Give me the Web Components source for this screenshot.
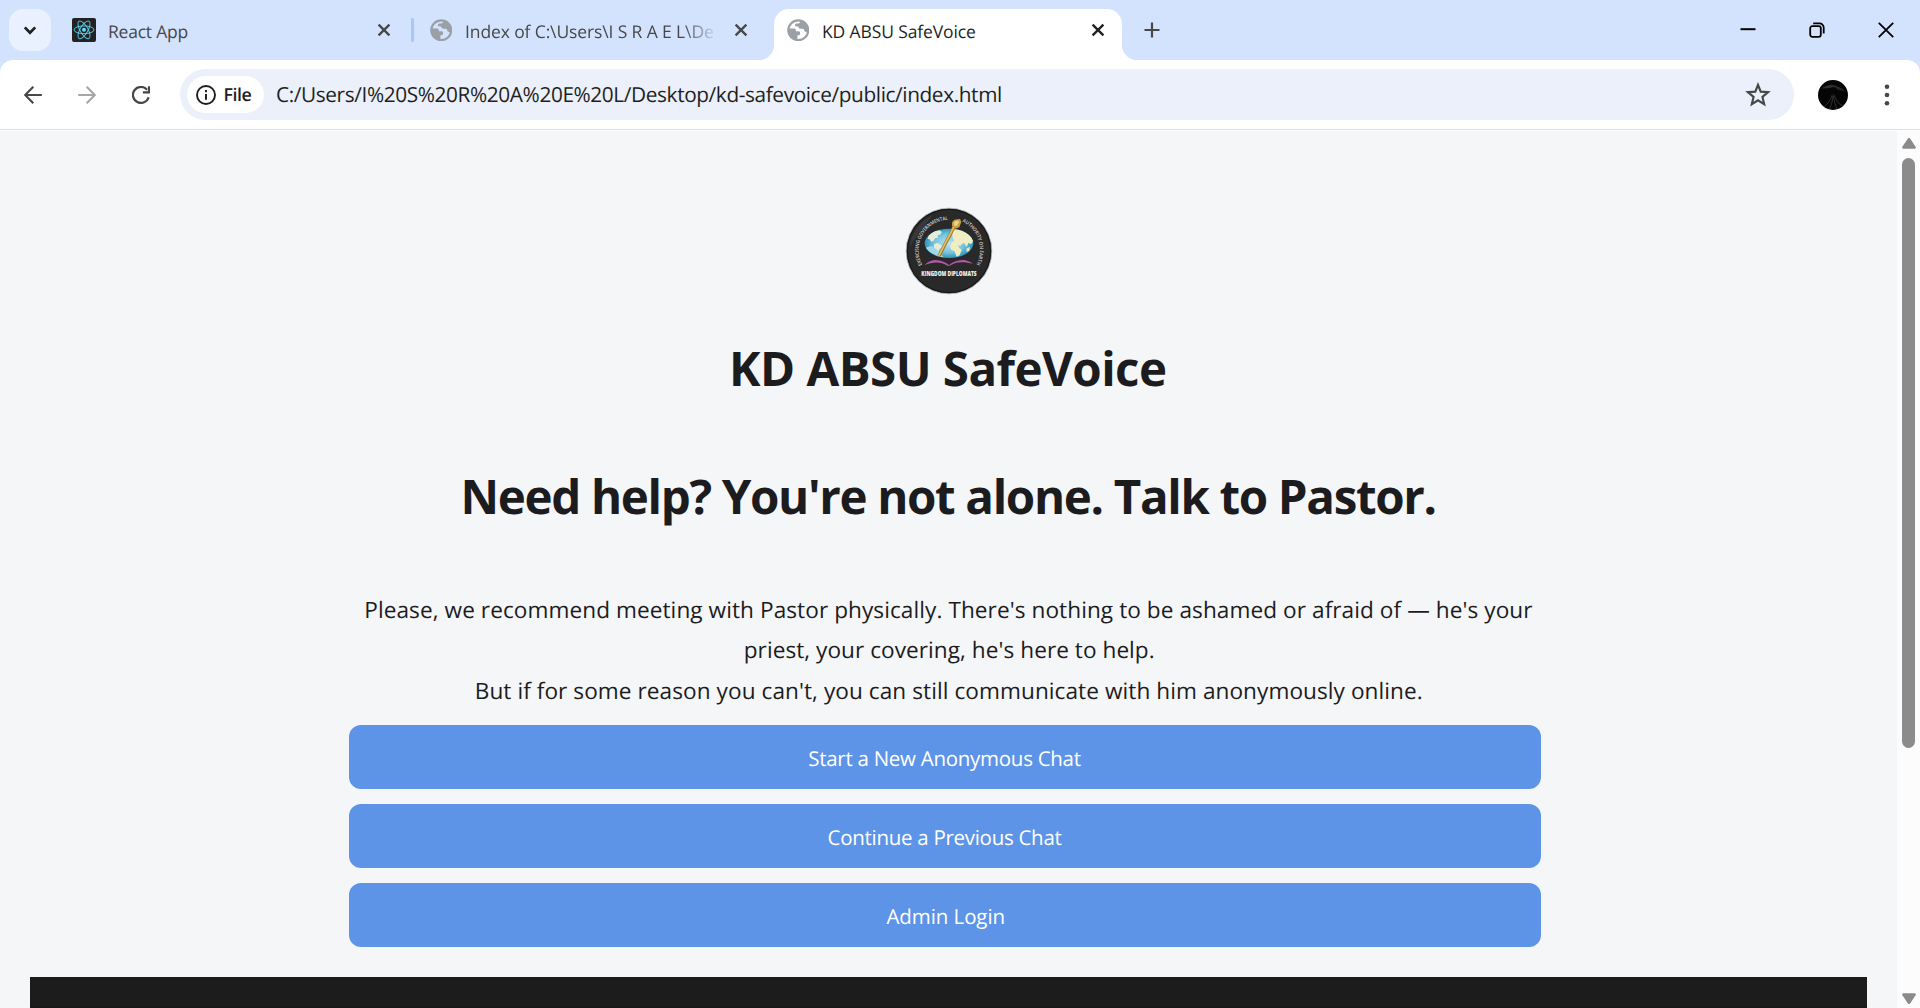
<!DOCTYPE html>
<html lang="en">
<head>
<meta charset="utf-8">
<title>KD ABSU SafeVoice</title>
<style>
html,body{margin:0;height:100%;overflow:hidden;font-family:"Open Sans","Noto Sans",sans-serif}
</style>
</head>
<body>
<browser-window></browser-window>
<script>
const define=(name,html,extra)=>customElements.define(name,class extends HTMLElement{
  constructor(){super();this.attachShadow({mode:'open'}).innerHTML=html;}
  connectedCallback(){if(extra)extra.call(this,this.shadowRoot);}
});

/* One line of text whose inked width is set by the "ink" attribute. */
const ctx=document.createElement('canvas').getContext('2d');
define('fit-text',`<style>
:host{display:block;white-space:nowrap;text-rendering:geometricPrecision;flex:none}
span{display:inline-block}</style><span></span>`,function(root){
  const s=root.querySelector('span'),t=this.getAttribute('text'),ink=+this.getAttribute('ink');
  s.textContent=t;
  this.style.width=ink+'px';
  const cs=getComputedStyle(s);
  ctx.font=cs.fontWeight+' '+cs.fontSize+' '+cs.fontFamily;
  const m=ctx.measureText(t),left=-m.actualBoundingBoxLeft,right=m.width-m.actualBoundingBoxRight;
  const adv=s.getBoundingClientRect().width;
  s.style.letterSpacing=(ink-(adv-left-right))/(t.length-1)+'px';
  s.style.marginLeft=-left+'px';
});

const icons={
 down:['0 0 24 24','<path d="M6.8 9.4l5.2 5.3 5.2-5.3" fill="none" stroke="#1f1f1f" stroke-width="2.7"/>'],
 close:['0 0 14 14','<path d="M1.6 1.6l10.8 10.8M12.4 1.6L1.6 12.4" stroke="currentColor" stroke-width="2.3"/>'],
 plus:['0 0 16 16','<path d="M8 .5v15M.5 8h15" stroke="#474747" stroke-width="2.2"/>'],
 globe:['0 0 24 24','<circle cx="12" cy="12" r="10.6" fill="none" stroke="#9aa0a6" stroke-width="2.4"/><path d="M2 10.2h5.2c2.2 0 2.3 1.5 2.3 2.8h2.8c1.3 0 1.7.8 1.7 2.2 0 1.7-1 2.2-2.9 2.2v5.1A10.6 10.6 0 0 1 2 10.2zM14.2 2.2c-.1 2.2-1 2.7-3.5 2.7-1.7 0-2.2.7-2.2 1.8 0 1 .9 1.2 2.6 1.2 1.5 0 1.6 2.4 3 2.4h2.8c1.2 0 1.3 1.6 1.8 2.6.4.9 1.3 1.2 3.4 1.1A10.6 10.6 0 0 0 14.2 2.2z" fill="#9aa0a6"/>'],
 react:['0 0 24 24','<rect width="24" height="24" rx="2" fill="#222"/><g fill="none" stroke="#61dafb" stroke-opacity=".85" stroke-width="1"><ellipse cx="12" cy="11.8" rx="10" ry="3.9"/><ellipse cx="12" cy="11.8" rx="10" ry="3.9" transform="rotate(60 12 11.8)"/><ellipse cx="12" cy="11.8" rx="10" ry="3.9" transform="rotate(120 12 11.8)"/></g><circle cx="12" cy="11.8" r="2" fill="#61dafb"/>'],
 back:['0 0 18 18','<path d="M17.8 9H1.8M9.3 .8L1.2 9l8.1 8.2" fill="none" stroke="currentColor" stroke-width="2.1"/>'],
 fwd:['0 0 18 18','<path d="M.2 9h16M8.7 .8L16.8 9l-8.1 8.2" fill="none" stroke="currentColor" stroke-width="2.1"/>'],
 reload:['0 0 18 18','<path d="M16.6 11.2A8 8 0 1 1 15 3.7" fill="none" stroke="#474747" stroke-width="2.2"/><path d="M17 .2v6.1h-6.1" fill="none" stroke="#474747" stroke-width="2.2"/>'],
 info:['0 0 20 20','<circle cx="10" cy="10" r="9" fill="none" stroke="#1f1f1f" stroke-width="1.9"/><path d="M10 8.9v5.9M10 5.1v2.1" stroke="#1f1f1f" stroke-width="2"/>'],
 star:['0 0 24 24','<path d="M12 2.7l2.5 6.2 6.8.5-5.2 4.4 1.6 6.6-5.7-3.5-5.7 3.5 1.6-6.6L2.7 9.4l6.8-.5z" fill="none" stroke="#474747" stroke-width="2"/>'],
 dots:['0 0 6 22','<g fill="#474747"><circle cx="3" cy="2.7" r="2.3"/><circle cx="3" cy="11" r="2.3"/><circle cx="3" cy="19.2" r="2.3"/></g>'],
 min:['0 0 16 16','<path d="M.5 7.2h15" stroke="#000" stroke-width="2"/>'],
 restore:['0 0 16 16','<rect x="1.2" y="4.2" width="10.6" height="10.6" rx="2" fill="none" stroke="#000" stroke-width="1.8"/><path d="M4.2 1.3h6.3a4.2 4.2 0 0 1 4.2 4.2v6" fill="none" stroke="#000" stroke-width="1.8"/>'],
 wclose:['0 0 16 16','<path d="M.8.8l14.4 14.4M15.2.8L.8 15.2" stroke="#000" stroke-width="1.8"/>'],
 avatar:['0 0 30 30','<circle cx="15" cy="15" r="15" fill="#050505"/><path d="M3 8.5c4-2.5 7-3 10-3.7l4 .8 8 3.5-3-.2-6-1.8-6 1.2z" fill="#303030"/><path d="M17 7l8 2 2 2-7-1z" fill="#242424"/><path d="M14.4 14.500C13 20 9.500 24 6 27M16 14.500c1.500 5 4.500 9 8.500 12M14.900 16c-.2 5-1.700 9-3.200 13M15.600 16c.3 5 1.900 9 3.400 13" fill="none" stroke="#3c3c3c" stroke-width=".8"/>'],
 up:['0 0 14 11','<path d="M5.700.8a1.600 1.600 0 0 1 2.600 0l5.300 7.900a1.300 1.300 0 0 1-1.100 2.100h-11a1.300 1.300 0 0 1-1.100-2.100z" fill="#8b8b8b"/>']
};
define('ui-icon',`<style>:host{display:block;flex:none}svg{display:block;width:100%;height:100%}</style><div style="height:100%"></div>`,function(root){
  const [vb,b]=icons[this.getAttribute('name')],w=this.getAttribute('w'),h=this.getAttribute('h')||w;
  this.style.width=w+'px';this.style.height=h+'px';
  root.querySelector('div').innerHTML=`<svg viewBox="${vb}">${b}</svg>`;
});

define('tab-strip',`<style>
:host{display:flex;height:60px;background:#d3e3fd;box-sizing:border-box;color:#474747}
.row{display:flex;align-items:center;height:42px;margin-top:9px}
.search{width:42px;height:42px;margin:9px 0 0 9px;border-radius:14px;background:#e9f1fe;display:flex;align-items:center;justify-content:center}
fit-text{font-size:17.500px;height:42px;padding-top:4px;box-sizing:border-box;line-height:39px}
.t1{margin-left:21px;width:318px}
.sep{width:3px;height:24px;background:#a8c7fa;margin:18px 0 0 0;border-radius:1px}
.t2{margin-left:15.500px;width:344.500px}
.clip{width:252px;overflow:hidden;-webkit-mask:linear-gradient(90deg,#000 216px,transparent 252px);mask:linear-gradient(90deg,#000 216px,transparent 252px)}
.active{width:348px;height:51px;margin-top:9px;background:#fff;border-radius:15px 15px 0 0;position:relative;color:#1f1f1f}
.active:before,.active:after{content:"";position:absolute;bottom:0;width:15px;height:15px}
.active:before{left:-15px;background:radial-gradient(circle at 0 0,transparent 14.600px,#fff 15.400px)}
.active:after{right:-15px;background:radial-gradient(circle at 100% 0,transparent 14.600px,#fff 15.400px)}
.active .row{margin-top:0}
.win{margin-left:auto;gap:53px;margin-right:26.500px}
</style>
<div class="search"><ui-icon name="down" w="24"></ui-icon></div>
<div class="row t1"><ui-icon name="react" w="24"></ui-icon><fit-text style="margin-left:13px" text="React App" ink="78.500"></fit-text><ui-icon name="close" w="14" style="margin-left:189.500px"></ui-icon></div>
<div style="width:21px"></div><div class="sep"></div>
<div class="row t2"><ui-icon name="globe" w="22.500"></ui-icon><div class="clip" style="margin-left:14px"><fit-text text="Index of C:\\Users\\I S R A E L\\De" ink="247"></fit-text></div><ui-icon name="close" w="14" style="margin-left:16px"></ui-icon></div>
<div class="active"><div class="row"><ui-icon name="globe" w="22.500" style="margin-left:12.500px"></ui-icon><fit-text style="margin-left:14px" text="KD ABSU SafeVoice" ink="152"></fit-text><ui-icon name="close" w="14" style="margin-left:116px"></ui-icon></div></div>
<div class="row" style="margin-left:22px"><ui-icon name="plus" w="16"></ui-icon></div>
<div class="row win"><ui-icon name="min" w="16"></ui-icon><ui-icon name="restore" w="16"></ui-icon><ui-icon name="wclose" w="16"></ui-icon></div>`);

define('tool-bar',`<style>
:host{display:block;background:#d3e3fd}
.bar{display:flex;align-items:center;height:69px;background:#fff;border-radius:13px 13px 0 0;border-bottom:1px solid #dcdee1;color:#474747}
.omni{display:flex;align-items:center;width:1614px;height:51px;border-radius:25.500px;background:#ebf0fa;margin-left:30px;color:#1f1f1f}
.chip{display:flex;align-items:center;width:77px;height:37px;border-radius:18.500px;background:#fff;margin-left:7px}
.gap{height:1px;background:#fff}
</style>
<div class="bar">
<ui-icon name="back" w="18" style="margin-left:24px"></ui-icon>
<ui-icon name="fwd" w="18" style="margin-left:36px;color:#a6a6a6"></ui-icon>
<ui-icon name="reload" w="18" style="margin-left:36px"></ui-icon>
<div class="omni"><div class="chip"><ui-icon name="info" w="20" style="margin-left:9px"></ui-icon><fit-text style="margin-left:8.500px;font-size:17.800px;font-weight:600;line-height:37px;padding-top:1px" text="File" ink="27"></fit-text></div>
<fit-text style="margin-left:13px;font-size:20.800px;line-height:48px;padding-top:1px" text="C:/Users/I%20S%20R%20A%20E%20L/Desktop/kd-safevoice/public/index.html" ink="724"></fit-text>
<ui-icon name="star" w="26" style="margin-left:auto;margin-right:23px"></ui-icon></div>
<ui-icon name="avatar" w="30" style="margin-left:24px"></ui-icon>
<ui-icon name="dots" w="6" h="22" style="margin-left:36px"></ui-icon>
</div><div class="gap"></div>`);

define('kd-logo',`<style>:host{display:block;width:88px;height:88px}svg{display:block;overflow:visible}
text{font-family:"Open Sans",sans-serif;font-weight:600;fill:#d6d6d6}</style>
<svg width="88" height="88" viewBox="46 36 264 264">
<defs><radialGradient id="sea"><stop offset="0" stop-color="#bfe6f2"/><stop offset=".65" stop-color="#73c2dc"/><stop offset="1" stop-color="#2c94ba"/></radialGradient>
<clipPath id="g"><ellipse cx="178" cy="145" rx="73" ry="44"/></clipPath>
<path id="a1" d="M98 209A91 91 0 0 1 194 76"/><path id="a2" d="M218 80A93 93 0 0 1 258 211"/></defs>
<circle cx="178" cy="168" r="128.500" fill="#29292a" stroke="#b4b6b8" stroke-width="2.500"/>
<circle cx="178" cy="168" r="125" fill="none" stroke="#151515" stroke-width="3"/>
<path d="M60 155A118 118 0 0 1 130 60L90 110z" fill="#383839"/>
<ellipse cx="178" cy="145" rx="73" ry="44" fill="url(#sea)"/>
<g clip-path="url(#g)"><path d="M117 121l14-12 18-3 8 5-6 8-7 2 1 7-8 1-5 8-7 3-5-7-6-1zM134 147l9-3 12 6 2 6-8 7-3 11-6 5-3-15-5-8z" fill="#e6edda"/><path d="M187 106l18-7 38 20 8 18-6 10-9-3-5 12-7-11-7 1-5 7-7-3 4 9 7 5-6 17-9 4-7-17-9-3-4-11 7-13 6-3-5-9z" fill="#f1edc3"/><path d="M231 160l10-4-2 11-9 4z" fill="#e8e9b9"/><path d="M108 158c12 16 33 27 55 29-15-12-20-29-40-34z" fill="#9fd8e8"/></g>
<path d="M149 181L193 96" stroke="#9d762a" stroke-width="10" stroke-linecap="round"/><path d="M148 181L193 95" stroke="#dfbd65" stroke-width="5.500" stroke-linecap="round"/>
<path d="M187 82l7-8 17-2 4 8-6 17-12 4-10-8z" fill="#c89e43"/><path d="M192 82l11-6 6 5-7 11-8 1z" fill="#edcf80"/>
<path d="M105 210c17-17 51-25 73-3 23-22 53-14 72-1-26-6-49-8-70 6h-7c-20-13-45-11-68-2z" fill="#ad5ca4"/><path d="M119 196c24-11 47-8 59 8 13-17 36-18 59-8-26-3-44 2-59 14-16-13-35-17-59-14z" fill="#37202f"/>
<text font-size="15"><textPath href="#a1" textLength="185" lengthAdjust="spacingAndGlyphs">EXERCISING GOVERNMENTAL</textPath></text>
<text font-size="15"><textPath href="#a2" textLength="150" lengthAdjust="spacingAndGlyphs">AUTHORITY ON EARTH</textPath></text>
<text x="95" y="242" font-size="21" textLength="166" lengthAdjust="spacingAndGlyphs" style="font-weight:800;fill:#f1f1f1">KINGDOM DIPLOMATS</text>
</svg>`);

define('chat-button',`<style>:host{display:flex;justify-content:center;height:64px;box-sizing:border-box;padding:2px 0 0 1px;border-radius:12px;background:#5d94e8;color:#fff;font-size:20.500px;line-height:64px}</style><slot></slot>`);

define('scroll-bar',`<style>:host{display:flex;flex-direction:column;align-items:center;width:23px;height:100%;box-sizing:border-box;padding:6.500px 0 4px;background:#fcfcfc}
.thumb{width:13px;height:590px;border-radius:6.500px;background:#8b8b8b;margin-top:9.500px}</style>
<ui-icon name="up" w="14" h="11"></ui-icon><div class="thumb"></div><ui-icon name="up" w="14" h="11" style="margin-top:auto;transform:rotate(180deg)"></ui-icon>`);

define('safe-voice-page',`<style>
:host{display:flex;flex-direction:column;align-items:center;flex:1;background:#f4f6f8;color:#1c1c1e;overflow:hidden}
h1,h2{margin:0;font-size:47.500px;font-weight:700;line-height:80px;height:80px;flex:none;padding-left:2px}
h1{margin-top:33px}h2{margin-top:48px}
.p{font-size:22.600px;line-height:40.500px;margin-top:53.500px;padding-left:1.500px;display:flex;flex-direction:column;align-items:center;flex:none}
.p fit-text{height:40.500px}
.btns{width:1200px;box-sizing:border-box;padding-right:8px;display:flex;flex-direction:column;gap:15px;margin-top:14px;flex:none}
.dark{align-self:stretch;height:31px;flex:none;margin:30px 30px 0;background:linear-gradient(#1c1c1c 29px,#151515 31px)}
</style>
<kd-logo style="margin-top:76px;flex:none"></kd-logo>
<h1><fit-text text="KD ABSU SafeVoice" ink="433"></fit-text></h1>
<h2><fit-text text="Need help? You're not alone. Talk to Pastor." ink="970"></fit-text></h2>
<div class="p"><fit-text text="Please, we recommend meeting with Pastor physically. There's nothing to be ashamed or afraid of — he's your" ink="1166"></fit-text>
<fit-text text="priest, your covering, he's here to help." ink="409"></fit-text>
<fit-text text="But if for some reason you can't, you can still communicate with him anonymously online." ink="945"></fit-text></div>
<div class="btns">
<chat-button><fit-text text="Start a New Anonymous Chat" ink="271.500"></fit-text></chat-button>
<chat-button><fit-text text="Continue a Previous Chat" ink="233"></fit-text></chat-button>
<chat-button><fit-text text="Admin Login" ink="117"></fit-text></chat-button></div>
<div class="dark"></div>`);

define('browser-window',`<style>:host{display:flex;flex-direction:column;width:1920px;height:1008px;overflow:hidden;background:#fff}
.view{display:flex;flex:1;min-height:0}tab-strip,tool-bar{flex:none}</style>
<tab-strip></tab-strip><tool-bar></tool-bar><div class="view"><safe-voice-page></safe-voice-page><scroll-bar></scroll-bar></div>`);
</script>
</body>
</html>
